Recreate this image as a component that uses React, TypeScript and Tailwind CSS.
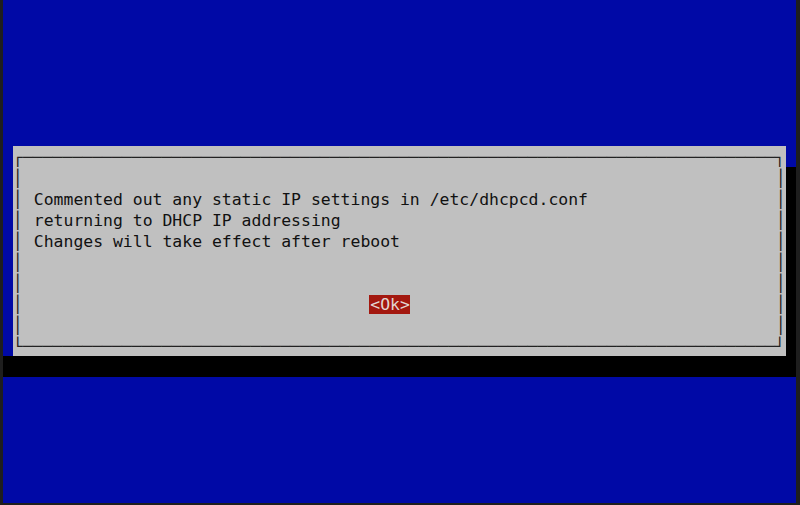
import type React from "react";

// whiptail-style message box, 80x24 terminal grid (cell 9.9 x 21)
const COLS = 76;

const lines = [
  "Commented out any static IP settings in /etc/dhcpcd.conf",
  "returning to DHCP IP addressing",
  "Changes will take effect after reboot",
];

const Frame = ({ children }: { children: React.ReactNode }) => (
  <span className="font-bold text-[#222]">{children}</span>
);

const Row = ({ children }: { children?: React.ReactNode }) => (
  <div className="flex">
    <Frame>{"│"}</Frame>
    <div className="flex-1">{children}</div>
    <Frame>{"│"}</Frame>
  </div>
);

const App: React.FC = () => {
  return (
    <div className="w-[800px] h-[505px] bg-[#1e1e1e] pl-[3px] overflow-hidden">
      <div className="w-[793px] h-[503px] bg-[#0009a6] flex flex-col font-['DejaVu_Sans_Mono',monospace] text-[16.45px] leading-[21px] text-[#111]">
        <div className="h-[146px]" />

        <div className="flex">
          <div className="w-[10px]" />

          {/* Dialog */}
          <div className="w-[773px] h-[210px] bg-[#c0c0c0] whitespace-pre pt-[1px]">
            <div>
              <Frame>{"┌" + "─".repeat(COLS) + "┐"}</Frame>
            </div>
            <Row />
            {lines.map((line, i) => (
              <Row key={i}>
                <span className="pl-[1px]">{" " + line}</span>
              </Row>
            ))}
            <Row />
            <Row />
            <Row>
              <span>{" ".repeat(35)}</span>
              <span className="bg-[#a3180f] text-[#e2d6d2] pl-[1px]">{"<Ok>"}</span>
            </Row>
            <Row />
            <div>
              <Frame>{"└" + "─".repeat(COLS) + "┘"}</Frame>
            </div>
          </div>

          {/* right shadow */}
          <div className="w-[10px] flex flex-col">
            <div className="h-[21px]" />
            <div className="flex-1 bg-black" />
          </div>
        </div>

        {/* bottom shadow */}
        <div className="h-[21px] bg-black" />
      </div>
    </div>
  );
};

export default App;
